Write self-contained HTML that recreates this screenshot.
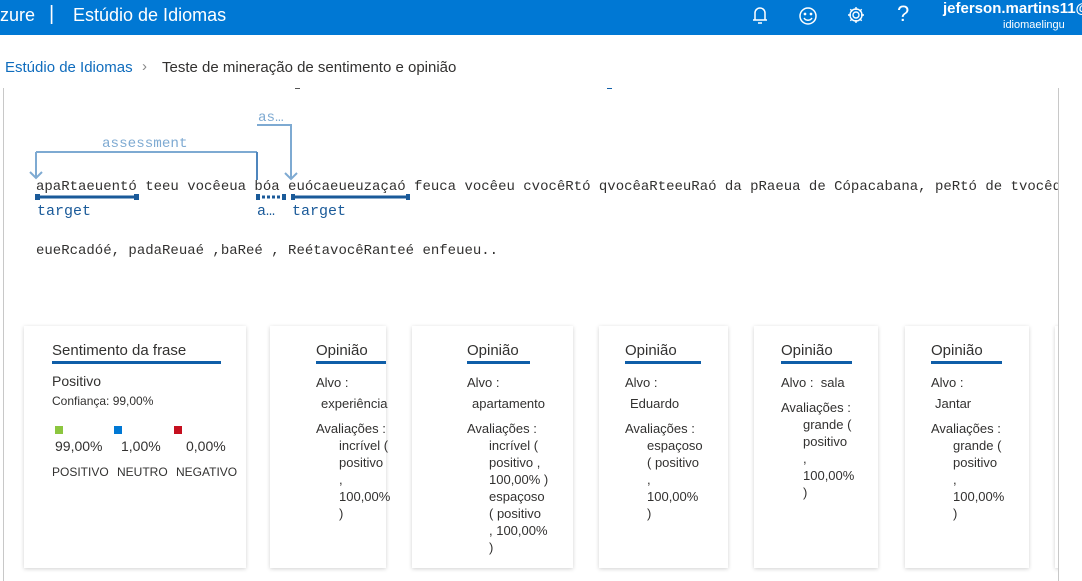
<!DOCTYPE html>
<html><head><meta charset="utf-8"><style>
*{margin:0;padding:0;box-sizing:border-box}
body{width:1082px;height:581px;overflow:hidden;background:#fff;position:relative;font-family:"Liberation Sans",sans-serif;color:#323130}
.a{position:absolute;white-space:nowrap}
.top{position:absolute;left:0;top:0;width:1082px;height:35px;background:#0078d4;color:#fff}
.mono{font-family:"Liberation Mono","DejaVu Sans Mono",monospace;font-size:14px;color:#323130}
.card{position:absolute;top:326px;height:242px;background:#fff;box-shadow:0 1px 4px rgba(0,0,0,.18)}
.h{position:absolute;font-size:15px;color:#323130;border-bottom:3px solid #0f5ea8;padding-bottom:1px;line-height:18px}
.t{position:absolute;font-size:13px;line-height:17px;color:#323130;white-space:nowrap}
</style></head><body>
<div class="top">
 <div class="a" style="left:0;top:5px;font-size:18px">zure</div>
 <div class="a" style="left:49px;top:3px;font-size:20px">|</div>
 <div class="a" style="left:73px;top:5px;font-size:18px">Estúdio de Idiomas</div>
 <svg class="a" style="left:750px;top:5px" width="20" height="22" viewBox="0 0 20 22" fill="none" stroke="#fff" stroke-width="1.5"><path d="M5 15V8a5 5 0 0 1 10 0v7M3 15h14M8 18h4"/></svg>
 <svg class="a" style="left:798px;top:6px" width="20" height="20" viewBox="0 0 20 20" fill="none" stroke="#fff" stroke-width="1.5"><circle cx="10" cy="10" r="8"/><circle cx="7" cy="8" r=".6" fill="#fff"/><circle cx="13" cy="8" r=".6" fill="#fff"/><path d="M6 12c2 3 6 3 8 0"/></svg>
 <svg class="a" style="left:846px;top:5px" width="20" height="20" viewBox="0 0 20 20" fill="none" stroke="#fff" stroke-width="1.4"><circle cx="10" cy="10" r="3"/><path d="M10 2v3M10 15v3M2 10h3M15 10h3M4.3 4.3l2.1 2.1M13.6 13.6l2.1 2.1M4.3 15.7l2.1-2.1M13.6 6.4l2.1-2.1"/><circle cx="10" cy="10" r="6"/></svg>
 <div class="a" style="left:897px;top:1px;font-size:22px">?</div>
 <div class="a" style="left:943px;top:0;font-size:15px;font-weight:bold">jeferson.martins11@</div>
 <div class="a" style="left:1003px;top:19px;font-size:11px">idiomaelingu</div>
</div>
<div class="a" style="left:5px;top:59px;font-size:15px;color:#0f6cbd">Estúdio de Idiomas</div>
<div class="a" style="left:142px;top:58px;font-size:15px;color:#888">›</div>
<div class="a" style="left:162px;top:59px;font-size:15px">Teste de mineração de sentimento e opinião</div>
<div class="a" style="left:3px;top:88px;width:1px;height:493px;background:#c8c8c8"></div>
<div class="a" style="left:295px;top:88px;width:5px;height:1px;background:#555"></div>
<div class="a" style="left:607px;top:88px;width:5px;height:1px;background:#0f5ea8"></div>
<svg class="a" style="left:0;top:100px" width="420" height="120" fill="none">
 <g stroke="#7eaad2" stroke-width="2">
 <path d="M36 52H257M36 52V78M30 72l6 6 6-6"/>
 <path d="M257 25H291V79M285 73l6 6 6-6"/>
 <path d="M257 52V80" stroke="#4f86bd"/>
 </g>
 <g stroke="#1a5a99" stroke-width="3"><path d="M37 97H137M292 97H409"/><path d="M257 97H285" stroke-dasharray="3 2"/></g>
 <g fill="#1a5a99"><rect x="35" y="94" width="5" height="6"/><rect x="134" y="94" width="5" height="6"/><rect x="256" y="94" width="4" height="6"/><rect x="282" y="94" width="4" height="6"/><rect x="291" y="94" width="4" height="6"/><rect x="406" y="94" width="4" height="6"/></g>
</svg>
<div class="a" style="left:102px;top:136px;font-family:'Liberation Mono',monospace;font-size:14.25px;color:#7eaad2">assessment</div>
<div class="a" style="left:258px;top:110px;font-family:'Liberation Mono',monospace;font-size:14.25px;color:#7eaad2">as…</div>
<div class="a mono" style="left:36px;top:179px">apaRtaeuentó teeu vocêeua bóa euócaeueuzaçaó feuca vocêeu cvocêRtó qvocêaRteeuRaó da pRaeua de Cópacabana, peRtó de tvocêdó</div>
<div class="a" style="left:37px;top:203px;font-family:'Liberation Mono',monospace;font-size:15px;color:#1a5a99">target</div>
<div class="a" style="left:257px;top:203px;font-family:'Liberation Mono',monospace;font-size:15px;color:#1a5a99">a…</div>
<div class="a" style="left:292px;top:203px;font-family:'Liberation Mono',monospace;font-size:15px;color:#1a5a99">target</div>
<div class="a mono" style="left:36px;top:243px">eueRcadóé, padaReuaé ,baReé , ReétavocêRanteé enfeueu..</div>

<div class="card" style="left:24px;width:222px"></div>
<div class="h" style="left:52px;top:342px;width:169px">Sentimento da frase</div>
<div class="t" style="left:52px;top:373px;font-size:14px">Positivo</div>
<div class="t" style="left:52px;top:393px;font-size:12px">Confiança: 99,00%</div>
<div class="a" style="left:55px;top:426px;width:8px;height:8px;background:#8cc63f"></div>
<div class="a" style="left:114px;top:426px;width:8px;height:8px;background:#0078d4"></div>
<div class="a" style="left:174px;top:426px;width:8px;height:8px;background:#c50f1f"></div>
<div class="t" style="left:55px;top:438px;font-size:14px">99,00%</div>
<div class="t" style="left:121px;top:438px;font-size:14px">1,00%</div>
<div class="t" style="left:186px;top:438px;font-size:14px">0,00%</div>
<div class="t" style="left:52px;top:464px;font-size:12px">POSITIVO</div>
<div class="t" style="left:117px;top:464px;font-size:12px">NEUTRO</div>
<div class="t" style="left:176px;top:464px;font-size:12px">NEGATIVO</div>

<div class="card" style="left:270px;width:116px"></div>
<div class="h" style="left:316px;top:342px;width:70px">Opinião</div>
<div class="t" style="left:316px;top:374px">Alvo :</div>
<div class="t" style="left:321px;top:395px">experiência</div>
<div class="t" style="left:316px;top:420px">Avaliações :</div>
<div class="t" style="left:339px;top:437px">incrível (<br>positivo<br>,<br>100,00%<br>)</div>

<div class="card" style="left:412px;width:161px"></div>
<div class="h" style="left:467px;top:342px;width:63px">Opinião</div>
<div class="t" style="left:467px;top:374px">Alvo :</div>
<div class="t" style="left:472px;top:395px">apartamento</div>
<div class="t" style="left:467px;top:420px">Avaliações :</div>
<div class="t" style="left:489px;top:437px">incrível (<br>positivo ,<br>100,00% )<br>espaçoso<br>( positivo<br>, 100,00%<br>)</div>

<div class="card" style="left:599px;width:129px"></div>
<div class="h" style="left:625px;top:342px;width:76px">Opinião</div>
<div class="t" style="left:625px;top:374px">Alvo :</div>
<div class="t" style="left:630px;top:395px">Eduardo</div>
<div class="t" style="left:625px;top:420px">Avaliações :</div>
<div class="t" style="left:647px;top:437px">espaçoso<br>( positivo<br>,<br>100,00%<br>)</div>

<div class="card" style="left:754px;width:124px"></div>
<div class="h" style="left:781px;top:342px;width:71px">Opinião</div>
<div class="t" style="left:781px;top:374px">Alvo :&nbsp; sala</div>
<div class="t" style="left:781px;top:399px">Avaliações :</div>
<div class="t" style="left:803px;top:416px">grande (<br>positivo<br>,<br>100,00%<br>)</div>

<div class="card" style="left:905px;width:124px"></div>
<div class="h" style="left:931px;top:342px;width:71px">Opinião</div>
<div class="t" style="left:931px;top:374px">Alvo :</div>
<div class="t" style="left:935px;top:395px">Jantar</div>
<div class="t" style="left:931px;top:420px">Avaliações :</div>
<div class="t" style="left:953px;top:437px">grande (<br>positivo<br>,<br>100,00%<br>)</div>

<div class="card" style="left:1055px;width:40px"></div>
<div class="a" style="left:1058px;top:88px;width:24px;height:493px;background:#fff"></div>
<div class="a" style="left:1058px;top:88px;width:1px;height:493px;background:#c8c8c8"></div>
</body></html>
